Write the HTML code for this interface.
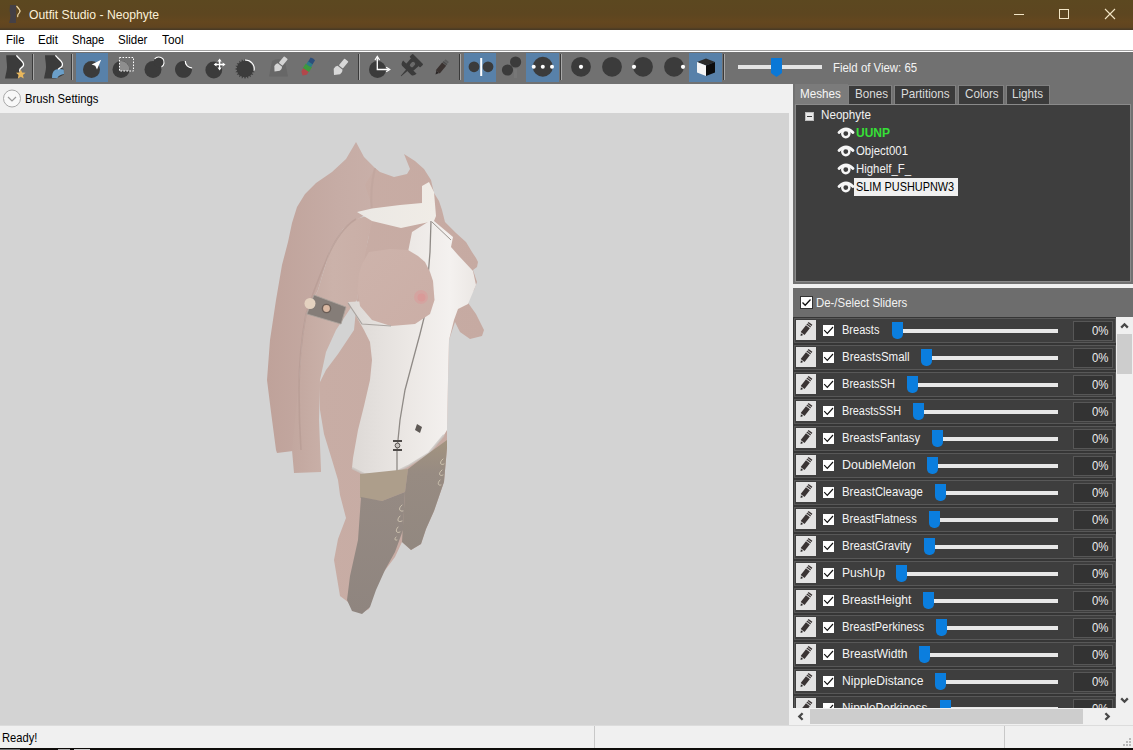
<!DOCTYPE html>
<html><head><meta charset="utf-8"><style>
*{margin:0;padding:0;box-sizing:border-box}
html,body{width:1133px;height:750px;overflow:hidden;background:#f0f0f0;font-family:"Liberation Sans",sans-serif;font-size:11.5px}
.a{position:absolute}
.t{position:absolute;white-space:nowrap;line-height:1}

</style></head><body>
<div class="a" style="left:0px;top:0px;width:1133px;height:30px;background:linear-gradient(#5c4820 0px,#5d4620 14px,#64471f 22px,#604420 27px,#5a4322 28px,#4a3a24 29px,#4a3a24 30px)"></div>

<svg class="a" style="left:8px;top:4px" width="16" height="20" viewBox="0 0 16 20">
<path d="M2 1 L8 1 L8 19 L1 19 C2 15 3 12 2 9 C1 6 2 3 2 1Z" fill="#40404c" opacity="0.85"/>
<path d="M8.5 2 L11 5 C12 6 12.5 7 11.5 8.5 L10 10.5 C9.5 11.2 10 12.5 9.5 13" stroke="#f0d9a8" stroke-width="1.2" fill="none"/>
</svg>
<div class="t" style="left:29px;top:9px;color:#fbf0d8;font-size:12.2px">Outfit Studio - Neophyte</div>
<div class="a" style="left:1014px;top:14px;width:10px;height:1px;background:#f3e6c6"></div>
<div class="a" style="left:1059px;top:9px;width:10px;height:10px;border:1px solid #f3e6c6"></div>
<svg class="a" style="left:1104px;top:8px" width="12" height="12" viewBox="0 0 12 12"><path d="M1 1L11 11M11 1L1 11" stroke="#f3e6c6" stroke-width="1.1"/></svg>
<div class="a" style="left:0px;top:30px;width:1133px;height:20px;background:#fff"></div>
<div class="a" style="left:0px;top:50px;width:1133px;height:1px;background:#a0a0a0"></div>
<div class="a" style="left:0px;top:51px;width:1133px;height:1px;background:#fff"></div>
<div class="t" style="left:6px;top:34px;color:#000;font-size:12.4px;transform:scaleX(0.93);transform-origin:0 0">File</div>
<div class="t" style="left:37.5px;top:34px;color:#000;font-size:12.4px;transform:scaleX(0.93);transform-origin:0 0">Edit</div>
<div class="t" style="left:71.5px;top:34px;color:#000;font-size:12.4px;transform:scaleX(0.9);transform-origin:0 0">Shape</div>
<div class="t" style="left:117.5px;top:34px;color:#000;font-size:12.4px;transform:scaleX(0.93);transform-origin:0 0">Slider</div>
<div class="t" style="left:162px;top:34px;color:#000;font-size:12.4px;transform:scaleX(0.95);transform-origin:0 0">Tool</div>
<div class="a" style="left:0px;top:52px;width:1133px;height:32px;background:#717171"></div>
<svg class="a" style="left:0;top:0" width="1133" height="84" viewBox="0 0 1133 84">
<rect x="32" y="54" width="1" height="26" fill="#3a3a3a"/><rect x="33" y="54" width="1" height="26" fill="#a8a8a8"/>
<rect x="71" y="54" width="1" height="26" fill="#3a3a3a"/><rect x="72" y="54" width="1" height="26" fill="#a8a8a8"/>
<rect x="358" y="54" width="1" height="26" fill="#3a3a3a"/><rect x="359" y="54" width="1" height="26" fill="#a8a8a8"/>
<rect x="459" y="54" width="1" height="26" fill="#3a3a3a"/><rect x="460" y="54" width="1" height="26" fill="#a8a8a8"/>
<rect x="560" y="54" width="1" height="26" fill="#3a3a3a"/><rect x="561" y="54" width="1" height="26" fill="#a8a8a8"/>
<rect x="723" y="54" width="1" height="26" fill="#3a3a3a"/><rect x="724" y="54" width="1" height="26" fill="#a8a8a8"/>
<rect x="76" y="53" width="32" height="29" fill="#5881a9"/>
<rect x="464" y="53" width="32" height="29" fill="#5881a9"/>
<rect x="526" y="53" width="33" height="29" fill="#5881a9"/>
<rect x="689" y="53" width="33" height="29" fill="#5881a9"/>
<path d="M6.2 55.2 L16.4 55.2 C18 57 20.5 59.5 22.5 61.5 C24.2 63.5 23.8 66 21.6 67.4 C19.8 68.4 19.3 69.5 19.2 71 L17.8 78.6 L5 78.6 C5.8 74 7 70 7 67 C7 63 6.2 59 6.2 55.2Z" fill="#3b3b3b"/>
<path d="M16.4 55.4 C18 57.5 20.6 59.6 22.6 62 C24.4 64.3 23.6 66.4 21.4 67.6 C19.8 68.5 19.5 69.8 19.6 71.5" stroke="#fff" stroke-width="1.3" fill="none"/>
<polygon points="20.80,69.40 22.12,72.58 25.56,72.85 22.94,75.10 23.74,78.45 20.80,76.65 17.86,78.45 18.66,75.10 16.04,72.85 19.48,72.58" fill="#e9b75c"/>
<path d="M45 55.2 L55.2 55.2 C57 57 59 58.8 61 61 C63 63.5 62.5 66 60.5 67.2 L63.8 69 L64 74.4 L56.2 78.6 L44 78.6 C44.8 74 46 70 46 67 C46 63 45 59 45 55.2Z" fill="#3b3b3b"/>
<path d="M52 78 C52 74 52.8 71.5 55 70 C57.5 68.6 61 68.8 63.8 69.4 L64 74 C61 74.5 58.8 75.2 57.2 78.2Z" fill="#6b9fc9"/>
<path d="M55.4 55.4 C57 57.5 59.4 59.2 61.4 61.6 C63.2 64 62.6 66.4 60.4 67.6 C59.2 68.2 58.6 68.8 58.2 69.4" stroke="#fff" stroke-width="1.3" fill="none"/>
<circle cx="91.5" cy="69.6" r="8.5" fill="#3b3b3b"/>
<path d="M101.2 59.8 L91.6 64.4 L95.2 65.8 L97 69.6Z" fill="#fff"/>
<circle cx="121" cy="69.6" r="8.5" fill="#3b3b3b"/>
<path d="M119.5 61.2 A8.5 8.5 0 0 1 129.4 69.6 L129.4 71 L119.5 71Z" fill="#8e8e8e"/>
<path d="M119.5 57.5 H133.5 V71 H119.5Z" fill="none" stroke="#fff" stroke-width="1" stroke-dasharray="1.6 1.4"/>
<circle cx="153" cy="69.6" r="8.5" fill="#3b3b3b"/>
<circle cx="159" cy="62" r="5.3" fill="#3b3b3b"/>
<path d="M154.6 59 A5.3 5.3 0 1 1 161.5 66.8" stroke="#fff" stroke-width="1.1" fill="none"/>
<path d="M177.6 63.2 A8.5 8.5 0 1 0 191.8 67.6 A6.3 6.3 0 0 1 185.5 61.3 A8.5 8.5 0 0 0 177.6 63.2Z" fill="#3b3b3b"/>
<path d="M185.3 61 A6.5 6.5 0 0 0 192.1 67.8" stroke="#fff" stroke-width="1.2" fill="none"/>
<circle cx="213.8" cy="70" r="8.4" fill="#3b3b3b"/>
<g fill="#fff"><path d="M219.6 58.6 L221.7 61.4 H217.5Z M219.6 70.4 L221.7 67.6 H217.5Z M213.7 64.5 L216.5 62.4 V66.6Z M225.5 64.5 L222.7 62.4 V66.6Z"/><path d="M218.9 61 H220.3 V68 H218.9Z M216 63.8 H223.2 V65.2 H216Z"/></g>
<polygon points="255.20,69.00 252.31,70.16 254.70,72.15 251.59,72.36 253.25,75.00 250.23,74.23 251.00,77.25 248.36,75.59 248.15,78.70 246.16,76.31 245.00,79.20 243.84,76.31 241.85,78.70 241.64,75.59 239.00,77.25 239.77,74.23 236.75,75.00 238.41,72.36 235.30,72.15 237.69,70.16 234.80,69.00 237.69,67.84 235.30,65.85 238.41,65.64 236.75,63.00 239.77,63.77 239.00,60.75 241.64,62.41 241.85,59.30 243.84,61.69 245.00,58.80 246.16,61.69 248.15,59.30 248.36,62.41 251.00,60.75 250.23,63.77 253.25,63.00 251.59,65.64 254.70,65.85 252.31,67.84" fill="#3b3b3b"/>
<path d="M245 58 A11 11 0 0 1 256.2 69.8 L245 69Z" fill="#717171"/>
<circle cx="245" cy="69" r="8.2" fill="#3b3b3b"/>
<path d="M245 60 A9 9 0 0 1 254.2 70.5" stroke="#fff" stroke-width="1.1" fill="none"/>
<path d="M272 61 Q278.5 57 285 61 L288 76.5 H269Z" fill="#676767"/>
<g transform="translate(274.5 71.5) rotate(-50)"><path d="M0 0 L4 -3.6 Q7 -4.2 8.5 -2.8 L8.5 2.8 Q7 4.2 4 3.6Z" fill="#d4d4d4"/><rect x="9.5" y="-2.4" width="8.5" height="4.8" rx="0.8" fill="#d4d4d4"/></g>
<g transform="translate(302.5 75.5) rotate(-58)"><path d="M0 0 L3 -3.2 H7 V3.2 H3Z" fill="#b3474b"/><path d="M6.5 -3.6 H12 V3.6 H6.5Z" fill="#3e9a3d"/><path d="M11.5 -2.8 H15.5 V2.8 H11.5Z" fill="#2d7b88"/><path d="M15 -2.6 H19.5 L20 0 L19.5 2.6 H15Z" fill="#2c4e7b"/></g>
<g transform="translate(334 75) rotate(-50)"><path d="M0 0 L4.5 -4.2 Q8 -4.8 9.5 -3.2 L9.5 3.2 Q8 4.8 4.5 4.2Z" fill="#d8d8d8"/><rect x="10.5" y="-2.6" width="9" height="5.2" rx="0.8" fill="#d8d8d8"/></g>
<circle cx="377.5" cy="69.4" r="8.5" fill="#3b3b3b"/>
<path d="M377.3 57.5 V69.5 H388.8" stroke="#fff" stroke-width="1.3" fill="none"/>
<path d="M375 60 L377.3 56.4 L379.6 60 M386.2 67.2 L389.8 69.5 L386.2 71.8" stroke="#fff" stroke-width="1.2" fill="none"/>
<g transform="translate(409.5 67.5) rotate(45)" fill="#3b3b3b"><rect x="-7.5" y="-12" width="15" height="4.5" rx="0.8"/><path d="M-5.5 -8 H5.5 L5 0 H-5Z"/><path d="M-9.5 -0.5 H9.5 Q9 3.5 6.5 4 H-6.5 Q-9 3.5 -9.5 -0.5Z"/><path d="M-1 3.5 H1 L0.3 12 H-0.3Z"/></g>
<g transform="translate(409.5 67.5) rotate(45)"><rect x="-2" y="-7" width="4" height="5.5" rx="1.6" fill="#6a6a6a"/></g>
<g transform="translate(435.5 74.5) rotate(-50)"><path d="M0 0 L3.5 -1.8 V1.8Z" fill="#2a2626"/><rect x="3.5" y="-2.6" width="10" height="5.2" fill="#3a3230"/><rect x="14" y="-2.4" width="1.6" height="4.8" fill="#4a4a4a"/><rect x="16.2" y="-2.2" width="2" height="4.4" fill="#5a5a5a"/></g>
<circle cx="474" cy="66.8" r="5.4" fill="#3b3b3b"/><circle cx="488" cy="66.8" r="5.4" fill="#3b3b3b"/>
<rect x="480.2" y="58" width="2" height="18" fill="#fff"/>
<circle cx="507.5" cy="70" r="5.6" fill="#3b3b3b"/><circle cx="515.6" cy="62" r="5.6" fill="#3b3b3b"/>
<rect x="514" y="69" width="3" height="9" fill="#777"/>
<circle cx="542.8" cy="66.8" r="10" fill="#3b3b3b"/>
<circle cx="533.7" cy="66.8" r="2" fill="#fff"/>
<circle cx="542.8" cy="66.8" r="2" fill="#fff"/>
<circle cx="552" cy="66.8" r="2" fill="#fff"/>
<circle cx="581" cy="66.8" r="9.9" fill="#3b3b3b"/>
<circle cx="581" cy="66.8" r="2.1" fill="#fff"/>
<circle cx="612" cy="66.8" r="9.9" fill="#3b3b3b"/>
<circle cx="643" cy="66.8" r="9.9" fill="#3b3b3b"/>
<circle cx="634" cy="66.8" r="2.1" fill="#fff"/>
<circle cx="674" cy="66.8" r="9.9" fill="#3b3b3b"/>
<circle cx="683" cy="66.8" r="2.1" fill="#fff"/>
<path d="M706 58.5 L715 62 L706 65.5 L697 62Z" fill="#2a2a2a"/><path d="M697 62 L706 65.5 L706 76 L697 72.5Z" fill="#f4f4f4"/><path d="M706 65.5 L715 62 L715 72.5 L706 76Z" fill="#0c0c0c"/>
<rect x="738" y="65" width="84" height="4" fill="#e4e4e4"/>
<path d="M771 58 H782 V73 L776.5 77 L771 73Z" fill="#0a78d7"/>
</svg>
<div class="t" style="left:833px;top:62px;color:#f4f4f4;font-size:12px;transform:scaleX(.95);transform-origin:0 0">Field of View: 65</div>
<div class="a" style="left:0px;top:84px;width:793px;height:29px;background:#f0f0f0"></div>
<svg class="a" style="left:2px;top:89px" width="20" height="20" viewBox="0 0 20 20"><circle cx="10" cy="9.5" r="8.5" fill="#f8f8f8" stroke="#a8a8a8" stroke-width="1"/><path d="M6 8 L10 12 L14 8" stroke="#9a9a9a" stroke-width="1.2" fill="none"/></svg>
<div class="t" style="left:24.5px;top:93px;color:#000;font-size:12.4px;transform:scaleX(.91);transform-origin:0 0">Brush Settings</div>
<div class="a" style="left:0px;top:113px;width:789px;height:612px;background:#d3d3d3"></div>
<svg class="a" style="left:0;top:113px" width="789" height="612" viewBox="0 113 789 612">
<defs>
<linearGradient id="gBack" x1="0" y1="0" x2="1" y2="0"><stop offset="0" stop-color="#bfa29a"/><stop offset="0.6" stop-color="#c6aca5"/><stop offset="1" stop-color="#c9b0a9"/></linearGradient>
<linearGradient id="gFront" x1="0" y1="0" x2="1" y2="0"><stop offset="0" stop-color="#c2a79f"/><stop offset="0.5" stop-color="#cbb2aa"/><stop offset="1" stop-color="#c9aea6"/></linearGradient>
<linearGradient id="gTorso" x1="0" y1="0" x2="1" y2="0"><stop offset="0" stop-color="#c8ada5"/><stop offset="1" stop-color="#c6aaa2"/></linearGradient>
<linearGradient id="gBreast" x1="0" y1="0" x2="1" y2="1"><stop offset="0" stop-color="#cdb3ab"/><stop offset="1" stop-color="#cbaea6"/></linearGradient>
<linearGradient id="gCollar" x1="0" y1="0" x2="1" y2="0"><stop offset="0" stop-color="#ebe8e4"/><stop offset="1" stop-color="#f0ece6"/></linearGradient>
<linearGradient id="gDress" x1="0" y1="0" x2="1" y2="0"><stop offset="0" stop-color="#dcd8d5"/><stop offset="0.45" stop-color="#ebe7e4"/><stop offset="0.8" stop-color="#f4f1ef"/><stop offset="1" stop-color="#ebe7e4"/></linearGradient>
<linearGradient id="gStock" x1="0" y1="0" x2="0" y2="1"><stop offset="0" stop-color="#958a83"/><stop offset="1" stop-color="#8f857f"/></linearGradient>
<linearGradient id="gFar" x1="0" y1="0" x2="0" y2="1"><stop offset="0" stop-color="#a39480"/><stop offset="0.3" stop-color="#978b82"/><stop offset="1" stop-color="#928880"/></linearGradient>
</defs>
<polygon points="356,142 346,159 332,172 316,183 305,194 297,207 292,223 288,242 282,265 276,300 270,340 267,380 271,412 276,450 277,453 301,450 300,420 299,380 302,340 306,314 318,290 330,250 343,229 356,220 370,212 385,178 375,168 364,157" fill="url(#gBack)" />
<polygon points="375,168 380,172 394,177 407,174 410,169 404,154 415,161 424,169 431,180 434,193 439,201 442,210 445,222 456,233 466,242 472,252 476,258 478,262 477,267 473,270 477,282 474,290 466,300 476,314 484,330 482,336 470,339 460,332 455,322 449,340 448,380 447,430 447,448 444,482 434,511 426,529 421,544 411,550 402,542 395,557 377,581 369,609 361,613 351,607 348,602 340,596 334,560 338,539 346,518 340,495 338,480 332,460 324,434 320,410 319,384 326,370 338,354 354,330 357,300 360,270 368,240 372,214 370,200 365,185" fill="url(#gTorso)" />
<polygon points="330,250 343,229 356,219 374,214 368,240 362,270 357,300 352,306 336,330 326,352 320,380 319,420 321,470 321,472 294,473 292,450 299,380 302,340 306,314 318,290" fill="url(#gFront)" />
<path d="M356 219 C345 226 335 240 328 256 C320 275 312 295 306 314 C302 335 299 360 299 390 C299 415 300 435 301 450" stroke="#b39890" stroke-width="1.6" fill="none" opacity="0.55"/>
<path d="M375 168 C372 180 370 195 372 214" stroke="#b79c94" stroke-width="2" fill="none" opacity="0.3"/>
<polygon points="357,212 372,208.5 400,205 422,203 422,186 429,182 434,192 436,216 434,221 401,228 372,221" fill="url(#gCollar)" />
<polygon points="408,252 412,232 431,220 434,221 453,237 451,247 458,255 473,271 476,285 468,304 458,309 454,320 449,340 448,380 447,430 444,435 429,453 408,466 390,475 364,474 352,468 353,458 358,430 364,406 370,380 372,360 370,342 364,330 348,302 367,301 400,300 412,270" fill="url(#gDress)" />
<path d="M352 468 L364 474 L390 475 L408 466 L429 453 L444 435" stroke="#c9c4c0" stroke-width="2" fill="none" opacity="0.8"/>
<path d="M431 221 L430 252 L427 290 L425 314 L420 334 L413 360 L405 390 L400 420 L397 450 L397 474" stroke="#8f8a86" stroke-width="1.3" fill="none"/><path d="M432 222 L451 240" stroke="#9a9590" stroke-width="1"/>
<polygon points="369,252 390,249 408,250 418,256 425,262 430,272 433,281 434.5,300 430,314 415,324 391,326 372,320 360,306 357.5,290 359,274 362,264" fill="url(#gBreast)" />
<circle cx="421" cy="297" r="7" fill="#d4a4a0"/><circle cx="421.5" cy="297.5" r="4" fill="#d99a98"/>
<path d="M348 303 L362 324 L391 326" stroke="#a9a4a0" stroke-width="1.2" fill="none"/>
<polygon points="360,474 408,469 405,492 382,501 360,498" fill="#ad9e8b" />
<polygon points="361,497 382,501 405,492 403,530 395,552 385,570 376,590 370,607 362,614 352,611 347,600 350,576 358,540" fill="url(#gStock)" />
<polygon points="408,469 429,453 447,440 447,448 444,482 434,511 426,529 421,544 411,550 402,542 405,492" fill="url(#gFar)" />
<polygon points="314,295 346,307 341,324 307,314" fill="#857d78"  stroke="#aaa29c" stroke-width="0.8"/>
<circle cx="310" cy="303.5" r="5.5" fill="#e4d2c0"/><circle cx="326.5" cy="308.5" r="4.8" fill="#6a5d56"/><circle cx="326.5" cy="308.5" r="3.4" fill="#d9b8a2"/>
<path d="M393 441 H402 M393 450 H402" stroke="#4e4a48" stroke-width="1.8"/><circle cx="397.5" cy="445.5" r="2.4" fill="#c9c4c0" stroke="#5a5552" stroke-width="1"/><path d="M417 424 L422 427 L420 433 L415 430Z" fill="#5e5955"/>
<g stroke="#ddd2bc" stroke-width="0.9" fill="none" stroke-linecap="round" opacity="0.85"><path d="M402 505 C398 508 399 512 403 511 M400 516 C396 520 398 523 402 521 M398 527 C395 530 396 534 400 532 M396 537 C394 539 395 541 397 540"/><path d="M443 459 C439 462 440 466 444 464 M442 470 C438 473 439 477 443 475 M440 480 C437 483 438 486 441 485"/></g>
</svg>
<div class="a" style="left:0px;top:725px;width:1133px;height:23px;background:#f0f0f0"></div>
<div class="a" style="left:0px;top:725px;width:1133px;height:1px;background:#dcdcdc"></div>
<div class="t" style="left:1.5px;top:732px;color:#000;font-size:12.4px;transform:scaleX(.9);transform-origin:0 0">Ready!</div>
<div class="a" style="left:594px;top:726px;width:1px;height:22px;background:#c8c8c8"></div>
<div class="a" style="left:1004px;top:726px;width:1px;height:22px;background:#c8c8c8"></div>
<svg class="a" style="left:1122px;top:737px" width="10" height="10" viewBox="0 0 10 10" fill="#b8b8b8"><rect x="7" y="1" width="2" height="2"/><rect x="4" y="4" width="2" height="2"/><rect x="7" y="4" width="2" height="2"/><rect x="1" y="7" width="2" height="2"/><rect x="4" y="7" width="2" height="2"/><rect x="7" y="7" width="2" height="2"/></svg>
<div class="a" style="left:0px;top:748px;width:1133px;height:2px;background:#0e0c0a"></div>
<div class="a" style="left:0px;top:749px;width:20px;height:1px;background:#707070"></div>
<div class="a" style="left:58px;top:749px;width:12px;height:1px;background:#a8a8a8"></div>
<div class="a" style="left:74px;top:749px;width:16px;height:1px;background:#c8c8c8"></div>
<div class="a" style="left:789px;top:84px;width:4px;height:641px;background:#f0f0f0"></div>
<div class="a" style="left:793px;top:84px;width:340px;height:200px;background:#717171"></div>
<div class="a" style="left:795px;top:84px;width:53px;height:20px;background:#7b7b7b"></div>
<div class="t" style="left:800px;top:88px;color:#f6f6f6;font-size:12.4px;transform:scaleX(.94);transform-origin:0 0">Meshes</div>
<div class="a" style="left:848px;top:85px;width:44px;height:19px;background:#3b3b3b;border:1px solid #808080;border-bottom:none"></div>
<div class="t" style="left:855px;top:88px;color:#dcdcdc;font-size:12.4px;transform:scaleX(.94);transform-origin:0 0">Bones</div>
<div class="a" style="left:894px;top:85px;width:62px;height:19px;background:#3b3b3b;border:1px solid #808080;border-bottom:none"></div>
<div class="t" style="left:901px;top:88px;color:#dcdcdc;font-size:12.4px;transform:scaleX(.94);transform-origin:0 0">Partitions</div>
<div class="a" style="left:958px;top:85px;width:46px;height:19px;background:#3b3b3b;border:1px solid #808080;border-bottom:none"></div>
<div class="t" style="left:965px;top:88px;color:#dcdcdc;font-size:12.4px;transform:scaleX(.94);transform-origin:0 0">Colors</div>
<div class="a" style="left:1006px;top:85px;width:44px;height:19px;background:#3b3b3b;border:1px solid #808080;border-bottom:none"></div>
<div class="t" style="left:1012px;top:88px;color:#dcdcdc;font-size:12.4px;transform:scaleX(.94);transform-origin:0 0">Lights</div>
<div class="a" style="left:795px;top:104px;width:336px;height:178px;background:#3e3e3e;border:1px solid #8a8a8a"></div>
<div class="a" style="left:805px;top:112px;width:9px;height:9px;background:#e8e8e8;border:1px solid #bdbdbd"></div>
<div class="a" style="left:807px;top:116px;width:5px;height:1px;background:#3a3a3a"></div>
<div class="t" style="left:821px;top:109px;color:#f2f2f2;font-size:12.4px;transform:scaleX(.94);transform-origin:0 0">Neophyte</div>
<svg class="a" style="left:837px;top:127px" width="18" height="12" viewBox="0 0 18 12"><path d="M2 5.6 Q9 -1.6 16 5.6" stroke="#f6f6f6" stroke-width="2.8" fill="none" stroke-linecap="round"/><circle cx="8.8" cy="6.6" r="3.6" fill="none" stroke="#f6f6f6" stroke-width="2.4"/><circle cx="8.8" cy="6.6" r="1.3" fill="#3e3e3e"/></svg>
<div class="t" style="left:856px;top:127px;transform-origin:0 0;font-size:12.4px;color:#36e036;font-weight:bold;transform:scaleX(.97);">UUNP</div>
<svg class="a" style="left:837px;top:145px" width="18" height="12" viewBox="0 0 18 12"><path d="M2 5.6 Q9 -1.6 16 5.6" stroke="#f6f6f6" stroke-width="2.8" fill="none" stroke-linecap="round"/><circle cx="8.8" cy="6.6" r="3.6" fill="none" stroke="#f6f6f6" stroke-width="2.4"/><circle cx="8.8" cy="6.6" r="1.3" fill="#3e3e3e"/></svg>
<div class="t" style="left:856px;top:145px;transform-origin:0 0;font-size:12.4px;color:#f2f2f2;transform:scaleX(.92);">Object001</div>
<svg class="a" style="left:837px;top:163px" width="18" height="12" viewBox="0 0 18 12"><path d="M2 5.6 Q9 -1.6 16 5.6" stroke="#f6f6f6" stroke-width="2.8" fill="none" stroke-linecap="round"/><circle cx="8.8" cy="6.6" r="3.6" fill="none" stroke="#f6f6f6" stroke-width="2.4"/><circle cx="8.8" cy="6.6" r="1.3" fill="#3e3e3e"/></svg>
<div class="t" style="left:856px;top:163px;transform-origin:0 0;font-size:12.4px;color:#f2f2f2;transform:scaleX(.92);">Highelf_F_</div>
<svg class="a" style="left:837px;top:181px" width="18" height="12" viewBox="0 0 18 12"><path d="M2 5.6 Q9 -1.6 16 5.6" stroke="#f6f6f6" stroke-width="2.8" fill="none" stroke-linecap="round"/><circle cx="8.8" cy="6.6" r="3.6" fill="none" stroke="#f6f6f6" stroke-width="2.4"/><circle cx="8.8" cy="6.6" r="1.3" fill="#3e3e3e"/></svg>
<div class="a" style="left:854px;top:178px;width:104px;height:18px;background:#f0f0f0"></div>
<div class="t" style="left:856px;top:181px;transform-origin:0 0;font-size:12.4px;color:#000;transform:scaleX(.88);">SLIM PUSHUPNW3</div>
<div class="a" style="left:793px;top:288px;width:340px;height:29px;background:#6d6d6d"></div>
<div class="a" style="left:800px;top:296px;width:13px;height:13px;background:#fff;border:1px solid #333"></div>
<svg class="a" style="left:800px;top:296px" width="13" height="13" viewBox="0 0 13 13"><path d="M2.5 6.5 L5.2 9.3 L10.5 3.5" stroke="#111" stroke-width="1.3" fill="none"/></svg>
<div class="t" style="left:816px;top:297px;color:#f2f2f2;font-size:12.4px;transform:scaleX(.92);transform-origin:0 0">De-/Select Sliders</div>
<div class="a" style="left:793px;top:317px;width:323px;height:391px;background:#363636;overflow:hidden">
<div class="a" style="left:1px;top:1px;width:322px;height:25px;background:#3e3e3e;border:1px solid #585858">
<div class="a" style="left:1px;top:1px;width:20px;height:20px;background:#e3e3e3"></div>
<svg class="a" style="left:0;top:0" width="24" height="24" viewBox="0 0 24 24"><g transform="translate(5.6 17) rotate(-52) scale(0.9)"><path d="M0 0 L2.6 -1.6 L2.6 1.6Z" fill="#2a2828"/><rect x="3.6" y="-2.7" width="9.6" height="5.4" fill="#3a3434"/><rect x="14" y="-2.7" width="1.4" height="5.4" fill="#3a3434"/><rect x="16.2" y="-2.7" width="1.6" height="5.4" fill="#3a3434"/></g></svg>
<div class="a" style="left:28px;top:6px;width:11px;height:11px;background:#fff"></div>
<svg class="a" style="left:28px;top:6px" width="11" height="11" viewBox="0 0 11 11"><path d="M1.2 5.2 L4.3 8.4 L10 2" stroke="#111" stroke-width="1.15" fill="none"/></svg>
<div class="t" style="left:47px;top:5px;color:#f4f4f4;font-size:12px;transform:scaleX(0.920);transform-origin:0 0">Breasts</div>
<div class="a" style="left:105px;top:10px;width:158px;height:4px;background:#e8e8e8"></div>
<div class="a" style="left:97px;top:3px;width:11px;height:17px;background:#0b7ede;border-radius:0 0 5px 5px"></div>
<div class="a" style="left:278px;top:2px;width:40px;height:20px;background:#333;border:1px solid #575757"></div>
<div class="t" style="left:297px;top:6px;color:#ececec;font-size:12px;transform:scaleX(.95);transform-origin:0 0">0%</div>
</div>
<div class="a" style="left:1px;top:28px;width:322px;height:25px;background:#3e3e3e;border:1px solid #585858">
<div class="a" style="left:1px;top:1px;width:20px;height:20px;background:#e3e3e3"></div>
<svg class="a" style="left:0;top:0" width="24" height="24" viewBox="0 0 24 24"><g transform="translate(5.6 17) rotate(-52) scale(0.9)"><path d="M0 0 L2.6 -1.6 L2.6 1.6Z" fill="#2a2828"/><rect x="3.6" y="-2.7" width="9.6" height="5.4" fill="#3a3434"/><rect x="14" y="-2.7" width="1.4" height="5.4" fill="#3a3434"/><rect x="16.2" y="-2.7" width="1.6" height="5.4" fill="#3a3434"/></g></svg>
<div class="a" style="left:28px;top:6px;width:11px;height:11px;background:#fff"></div>
<svg class="a" style="left:28px;top:6px" width="11" height="11" viewBox="0 0 11 11"><path d="M1.2 5.2 L4.3 8.4 L10 2" stroke="#111" stroke-width="1.15" fill="none"/></svg>
<div class="t" style="left:47px;top:5px;color:#f4f4f4;font-size:12px;transform:scaleX(0.957);transform-origin:0 0">BreastsSmall</div>
<div class="a" style="left:134px;top:10px;width:129px;height:4px;background:#e8e8e8"></div>
<div class="a" style="left:126px;top:3px;width:11px;height:17px;background:#0b7ede;border-radius:0 0 5px 5px"></div>
<div class="a" style="left:278px;top:2px;width:40px;height:20px;background:#333;border:1px solid #575757"></div>
<div class="t" style="left:297px;top:6px;color:#ececec;font-size:12px;transform:scaleX(.95);transform-origin:0 0">0%</div>
</div>
<div class="a" style="left:1px;top:55px;width:322px;height:25px;background:#3e3e3e;border:1px solid #585858">
<div class="a" style="left:1px;top:1px;width:20px;height:20px;background:#e3e3e3"></div>
<svg class="a" style="left:0;top:0" width="24" height="24" viewBox="0 0 24 24"><g transform="translate(5.6 17) rotate(-52) scale(0.9)"><path d="M0 0 L2.6 -1.6 L2.6 1.6Z" fill="#2a2828"/><rect x="3.6" y="-2.7" width="9.6" height="5.4" fill="#3a3434"/><rect x="14" y="-2.7" width="1.4" height="5.4" fill="#3a3434"/><rect x="16.2" y="-2.7" width="1.6" height="5.4" fill="#3a3434"/></g></svg>
<div class="a" style="left:28px;top:6px;width:11px;height:11px;background:#fff"></div>
<svg class="a" style="left:28px;top:6px" width="11" height="11" viewBox="0 0 11 11"><path d="M1.2 5.2 L4.3 8.4 L10 2" stroke="#111" stroke-width="1.15" fill="none"/></svg>
<div class="t" style="left:47px;top:5px;color:#f4f4f4;font-size:12px;transform:scaleX(0.925);transform-origin:0 0">BreastsSH</div>
<div class="a" style="left:120px;top:10px;width:143px;height:4px;background:#e8e8e8"></div>
<div class="a" style="left:112px;top:3px;width:11px;height:17px;background:#0b7ede;border-radius:0 0 5px 5px"></div>
<div class="a" style="left:278px;top:2px;width:40px;height:20px;background:#333;border:1px solid #575757"></div>
<div class="t" style="left:297px;top:6px;color:#ececec;font-size:12px;transform:scaleX(.95);transform-origin:0 0">0%</div>
</div>
<div class="a" style="left:1px;top:82px;width:322px;height:25px;background:#3e3e3e;border:1px solid #585858">
<div class="a" style="left:1px;top:1px;width:20px;height:20px;background:#e3e3e3"></div>
<svg class="a" style="left:0;top:0" width="24" height="24" viewBox="0 0 24 24"><g transform="translate(5.6 17) rotate(-52) scale(0.9)"><path d="M0 0 L2.6 -1.6 L2.6 1.6Z" fill="#2a2828"/><rect x="3.6" y="-2.7" width="9.6" height="5.4" fill="#3a3434"/><rect x="14" y="-2.7" width="1.4" height="5.4" fill="#3a3434"/><rect x="16.2" y="-2.7" width="1.6" height="5.4" fill="#3a3434"/></g></svg>
<div class="a" style="left:28px;top:6px;width:11px;height:11px;background:#fff"></div>
<svg class="a" style="left:28px;top:6px" width="11" height="11" viewBox="0 0 11 11"><path d="M1.2 5.2 L4.3 8.4 L10 2" stroke="#111" stroke-width="1.15" fill="none"/></svg>
<div class="t" style="left:47px;top:5px;color:#f4f4f4;font-size:12px;transform:scaleX(0.903);transform-origin:0 0">BreastsSSH</div>
<div class="a" style="left:126px;top:10px;width:137px;height:4px;background:#e8e8e8"></div>
<div class="a" style="left:118px;top:3px;width:11px;height:17px;background:#0b7ede;border-radius:0 0 5px 5px"></div>
<div class="a" style="left:278px;top:2px;width:40px;height:20px;background:#333;border:1px solid #575757"></div>
<div class="t" style="left:297px;top:6px;color:#ececec;font-size:12px;transform:scaleX(.95);transform-origin:0 0">0%</div>
</div>
<div class="a" style="left:1px;top:109px;width:322px;height:25px;background:#3e3e3e;border:1px solid #585858">
<div class="a" style="left:1px;top:1px;width:20px;height:20px;background:#e3e3e3"></div>
<svg class="a" style="left:0;top:0" width="24" height="24" viewBox="0 0 24 24"><g transform="translate(5.6 17) rotate(-52) scale(0.9)"><path d="M0 0 L2.6 -1.6 L2.6 1.6Z" fill="#2a2828"/><rect x="3.6" y="-2.7" width="9.6" height="5.4" fill="#3a3434"/><rect x="14" y="-2.7" width="1.4" height="5.4" fill="#3a3434"/><rect x="16.2" y="-2.7" width="1.6" height="5.4" fill="#3a3434"/></g></svg>
<div class="a" style="left:28px;top:6px;width:11px;height:11px;background:#fff"></div>
<svg class="a" style="left:28px;top:6px" width="11" height="11" viewBox="0 0 11 11"><path d="M1.2 5.2 L4.3 8.4 L10 2" stroke="#111" stroke-width="1.15" fill="none"/></svg>
<div class="t" style="left:47px;top:5px;color:#f4f4f4;font-size:12px;transform:scaleX(0.937);transform-origin:0 0">BreastsFantasy</div>
<div class="a" style="left:145px;top:10px;width:118px;height:4px;background:#e8e8e8"></div>
<div class="a" style="left:137px;top:3px;width:11px;height:17px;background:#0b7ede;border-radius:0 0 5px 5px"></div>
<div class="a" style="left:278px;top:2px;width:40px;height:20px;background:#333;border:1px solid #575757"></div>
<div class="t" style="left:297px;top:6px;color:#ececec;font-size:12px;transform:scaleX(.95);transform-origin:0 0">0%</div>
</div>
<div class="a" style="left:1px;top:136px;width:322px;height:25px;background:#3e3e3e;border:1px solid #585858">
<div class="a" style="left:1px;top:1px;width:20px;height:20px;background:#e3e3e3"></div>
<svg class="a" style="left:0;top:0" width="24" height="24" viewBox="0 0 24 24"><g transform="translate(5.6 17) rotate(-52) scale(0.9)"><path d="M0 0 L2.6 -1.6 L2.6 1.6Z" fill="#2a2828"/><rect x="3.6" y="-2.7" width="9.6" height="5.4" fill="#3a3434"/><rect x="14" y="-2.7" width="1.4" height="5.4" fill="#3a3434"/><rect x="16.2" y="-2.7" width="1.6" height="5.4" fill="#3a3434"/></g></svg>
<div class="a" style="left:28px;top:6px;width:11px;height:11px;background:#fff"></div>
<svg class="a" style="left:28px;top:6px" width="11" height="11" viewBox="0 0 11 11"><path d="M1.2 5.2 L4.3 8.4 L10 2" stroke="#111" stroke-width="1.15" fill="none"/></svg>
<div class="t" style="left:47px;top:5px;color:#f4f4f4;font-size:12px;transform:scaleX(1.039);transform-origin:0 0">DoubleMelon</div>
<div class="a" style="left:140px;top:10px;width:123px;height:4px;background:#e8e8e8"></div>
<div class="a" style="left:132px;top:3px;width:11px;height:17px;background:#0b7ede;border-radius:0 0 5px 5px"></div>
<div class="a" style="left:278px;top:2px;width:40px;height:20px;background:#333;border:1px solid #575757"></div>
<div class="t" style="left:297px;top:6px;color:#ececec;font-size:12px;transform:scaleX(.95);transform-origin:0 0">0%</div>
</div>
<div class="a" style="left:1px;top:163px;width:322px;height:25px;background:#3e3e3e;border:1px solid #585858">
<div class="a" style="left:1px;top:1px;width:20px;height:20px;background:#e3e3e3"></div>
<svg class="a" style="left:0;top:0" width="24" height="24" viewBox="0 0 24 24"><g transform="translate(5.6 17) rotate(-52) scale(0.9)"><path d="M0 0 L2.6 -1.6 L2.6 1.6Z" fill="#2a2828"/><rect x="3.6" y="-2.7" width="9.6" height="5.4" fill="#3a3434"/><rect x="14" y="-2.7" width="1.4" height="5.4" fill="#3a3434"/><rect x="16.2" y="-2.7" width="1.6" height="5.4" fill="#3a3434"/></g></svg>
<div class="a" style="left:28px;top:6px;width:11px;height:11px;background:#fff"></div>
<svg class="a" style="left:28px;top:6px" width="11" height="11" viewBox="0 0 11 11"><path d="M1.2 5.2 L4.3 8.4 L10 2" stroke="#111" stroke-width="1.15" fill="none"/></svg>
<div class="t" style="left:47px;top:5px;color:#f4f4f4;font-size:12px;transform:scaleX(0.948);transform-origin:0 0">BreastCleavage</div>
<div class="a" style="left:148px;top:10px;width:115px;height:4px;background:#e8e8e8"></div>
<div class="a" style="left:140px;top:3px;width:11px;height:17px;background:#0b7ede;border-radius:0 0 5px 5px"></div>
<div class="a" style="left:278px;top:2px;width:40px;height:20px;background:#333;border:1px solid #575757"></div>
<div class="t" style="left:297px;top:6px;color:#ececec;font-size:12px;transform:scaleX(.95);transform-origin:0 0">0%</div>
</div>
<div class="a" style="left:1px;top:190px;width:322px;height:25px;background:#3e3e3e;border:1px solid #585858">
<div class="a" style="left:1px;top:1px;width:20px;height:20px;background:#e3e3e3"></div>
<svg class="a" style="left:0;top:0" width="24" height="24" viewBox="0 0 24 24"><g transform="translate(5.6 17) rotate(-52) scale(0.9)"><path d="M0 0 L2.6 -1.6 L2.6 1.6Z" fill="#2a2828"/><rect x="3.6" y="-2.7" width="9.6" height="5.4" fill="#3a3434"/><rect x="14" y="-2.7" width="1.4" height="5.4" fill="#3a3434"/><rect x="16.2" y="-2.7" width="1.6" height="5.4" fill="#3a3434"/></g></svg>
<div class="a" style="left:28px;top:6px;width:11px;height:11px;background:#fff"></div>
<svg class="a" style="left:28px;top:6px" width="11" height="11" viewBox="0 0 11 11"><path d="M1.2 5.2 L4.3 8.4 L10 2" stroke="#111" stroke-width="1.15" fill="none"/></svg>
<div class="t" style="left:47px;top:5px;color:#f4f4f4;font-size:12px;transform:scaleX(0.934);transform-origin:0 0">BreastFlatness</div>
<div class="a" style="left:142px;top:10px;width:121px;height:4px;background:#e8e8e8"></div>
<div class="a" style="left:134px;top:3px;width:11px;height:17px;background:#0b7ede;border-radius:0 0 5px 5px"></div>
<div class="a" style="left:278px;top:2px;width:40px;height:20px;background:#333;border:1px solid #575757"></div>
<div class="t" style="left:297px;top:6px;color:#ececec;font-size:12px;transform:scaleX(.95);transform-origin:0 0">0%</div>
</div>
<div class="a" style="left:1px;top:217px;width:322px;height:25px;background:#3e3e3e;border:1px solid #585858">
<div class="a" style="left:1px;top:1px;width:20px;height:20px;background:#e3e3e3"></div>
<svg class="a" style="left:0;top:0" width="24" height="24" viewBox="0 0 24 24"><g transform="translate(5.6 17) rotate(-52) scale(0.9)"><path d="M0 0 L2.6 -1.6 L2.6 1.6Z" fill="#2a2828"/><rect x="3.6" y="-2.7" width="9.6" height="5.4" fill="#3a3434"/><rect x="14" y="-2.7" width="1.4" height="5.4" fill="#3a3434"/><rect x="16.2" y="-2.7" width="1.6" height="5.4" fill="#3a3434"/></g></svg>
<div class="a" style="left:28px;top:6px;width:11px;height:11px;background:#fff"></div>
<svg class="a" style="left:28px;top:6px" width="11" height="11" viewBox="0 0 11 11"><path d="M1.2 5.2 L4.3 8.4 L10 2" stroke="#111" stroke-width="1.15" fill="none"/></svg>
<div class="t" style="left:47px;top:5px;color:#f4f4f4;font-size:12px;transform:scaleX(0.954);transform-origin:0 0">BreastGravity</div>
<div class="a" style="left:137px;top:10px;width:126px;height:4px;background:#e8e8e8"></div>
<div class="a" style="left:129px;top:3px;width:11px;height:17px;background:#0b7ede;border-radius:0 0 5px 5px"></div>
<div class="a" style="left:278px;top:2px;width:40px;height:20px;background:#333;border:1px solid #575757"></div>
<div class="t" style="left:297px;top:6px;color:#ececec;font-size:12px;transform:scaleX(.95);transform-origin:0 0">0%</div>
</div>
<div class="a" style="left:1px;top:244px;width:322px;height:25px;background:#3e3e3e;border:1px solid #585858">
<div class="a" style="left:1px;top:1px;width:20px;height:20px;background:#e3e3e3"></div>
<svg class="a" style="left:0;top:0" width="24" height="24" viewBox="0 0 24 24"><g transform="translate(5.6 17) rotate(-52) scale(0.9)"><path d="M0 0 L2.6 -1.6 L2.6 1.6Z" fill="#2a2828"/><rect x="3.6" y="-2.7" width="9.6" height="5.4" fill="#3a3434"/><rect x="14" y="-2.7" width="1.4" height="5.4" fill="#3a3434"/><rect x="16.2" y="-2.7" width="1.6" height="5.4" fill="#3a3434"/></g></svg>
<div class="a" style="left:28px;top:6px;width:11px;height:11px;background:#fff"></div>
<svg class="a" style="left:28px;top:6px" width="11" height="11" viewBox="0 0 11 11"><path d="M1.2 5.2 L4.3 8.4 L10 2" stroke="#111" stroke-width="1.15" fill="none"/></svg>
<div class="t" style="left:47px;top:5px;color:#f4f4f4;font-size:12px;transform:scaleX(1.007);transform-origin:0 0">PushUp</div>
<div class="a" style="left:109px;top:10px;width:154px;height:4px;background:#e8e8e8"></div>
<div class="a" style="left:101px;top:3px;width:11px;height:17px;background:#0b7ede;border-radius:0 0 5px 5px"></div>
<div class="a" style="left:278px;top:2px;width:40px;height:20px;background:#333;border:1px solid #575757"></div>
<div class="t" style="left:297px;top:6px;color:#ececec;font-size:12px;transform:scaleX(.95);transform-origin:0 0">0%</div>
</div>
<div class="a" style="left:1px;top:271px;width:322px;height:25px;background:#3e3e3e;border:1px solid #585858">
<div class="a" style="left:1px;top:1px;width:20px;height:20px;background:#e3e3e3"></div>
<svg class="a" style="left:0;top:0" width="24" height="24" viewBox="0 0 24 24"><g transform="translate(5.6 17) rotate(-52) scale(0.9)"><path d="M0 0 L2.6 -1.6 L2.6 1.6Z" fill="#2a2828"/><rect x="3.6" y="-2.7" width="9.6" height="5.4" fill="#3a3434"/><rect x="14" y="-2.7" width="1.4" height="5.4" fill="#3a3434"/><rect x="16.2" y="-2.7" width="1.6" height="5.4" fill="#3a3434"/></g></svg>
<div class="a" style="left:28px;top:6px;width:11px;height:11px;background:#fff"></div>
<svg class="a" style="left:28px;top:6px" width="11" height="11" viewBox="0 0 11 11"><path d="M1.2 5.2 L4.3 8.4 L10 2" stroke="#111" stroke-width="1.15" fill="none"/></svg>
<div class="t" style="left:47px;top:5px;color:#f4f4f4;font-size:12px;transform:scaleX(0.999);transform-origin:0 0">BreastHeight</div>
<div class="a" style="left:136px;top:10px;width:127px;height:4px;background:#e8e8e8"></div>
<div class="a" style="left:128px;top:3px;width:11px;height:17px;background:#0b7ede;border-radius:0 0 5px 5px"></div>
<div class="a" style="left:278px;top:2px;width:40px;height:20px;background:#333;border:1px solid #575757"></div>
<div class="t" style="left:297px;top:6px;color:#ececec;font-size:12px;transform:scaleX(.95);transform-origin:0 0">0%</div>
</div>
<div class="a" style="left:1px;top:298px;width:322px;height:25px;background:#3e3e3e;border:1px solid #585858">
<div class="a" style="left:1px;top:1px;width:20px;height:20px;background:#e3e3e3"></div>
<svg class="a" style="left:0;top:0" width="24" height="24" viewBox="0 0 24 24"><g transform="translate(5.6 17) rotate(-52) scale(0.9)"><path d="M0 0 L2.6 -1.6 L2.6 1.6Z" fill="#2a2828"/><rect x="3.6" y="-2.7" width="9.6" height="5.4" fill="#3a3434"/><rect x="14" y="-2.7" width="1.4" height="5.4" fill="#3a3434"/><rect x="16.2" y="-2.7" width="1.6" height="5.4" fill="#3a3434"/></g></svg>
<div class="a" style="left:28px;top:6px;width:11px;height:11px;background:#fff"></div>
<svg class="a" style="left:28px;top:6px" width="11" height="11" viewBox="0 0 11 11"><path d="M1.2 5.2 L4.3 8.4 L10 2" stroke="#111" stroke-width="1.15" fill="none"/></svg>
<div class="t" style="left:47px;top:5px;color:#f4f4f4;font-size:12px;transform:scaleX(0.940);transform-origin:0 0">BreastPerkiness</div>
<div class="a" style="left:149px;top:10px;width:114px;height:4px;background:#e8e8e8"></div>
<div class="a" style="left:141px;top:3px;width:11px;height:17px;background:#0b7ede;border-radius:0 0 5px 5px"></div>
<div class="a" style="left:278px;top:2px;width:40px;height:20px;background:#333;border:1px solid #575757"></div>
<div class="t" style="left:297px;top:6px;color:#ececec;font-size:12px;transform:scaleX(.95);transform-origin:0 0">0%</div>
</div>
<div class="a" style="left:1px;top:325px;width:322px;height:25px;background:#3e3e3e;border:1px solid #585858">
<div class="a" style="left:1px;top:1px;width:20px;height:20px;background:#e3e3e3"></div>
<svg class="a" style="left:0;top:0" width="24" height="24" viewBox="0 0 24 24"><g transform="translate(5.6 17) rotate(-52) scale(0.9)"><path d="M0 0 L2.6 -1.6 L2.6 1.6Z" fill="#2a2828"/><rect x="3.6" y="-2.7" width="9.6" height="5.4" fill="#3a3434"/><rect x="14" y="-2.7" width="1.4" height="5.4" fill="#3a3434"/><rect x="16.2" y="-2.7" width="1.6" height="5.4" fill="#3a3434"/></g></svg>
<div class="a" style="left:28px;top:6px;width:11px;height:11px;background:#fff"></div>
<svg class="a" style="left:28px;top:6px" width="11" height="11" viewBox="0 0 11 11"><path d="M1.2 5.2 L4.3 8.4 L10 2" stroke="#111" stroke-width="1.15" fill="none"/></svg>
<div class="t" style="left:47px;top:5px;color:#f4f4f4;font-size:12px;transform:scaleX(1.002);transform-origin:0 0">BreastWidth</div>
<div class="a" style="left:132px;top:10px;width:131px;height:4px;background:#e8e8e8"></div>
<div class="a" style="left:124px;top:3px;width:11px;height:17px;background:#0b7ede;border-radius:0 0 5px 5px"></div>
<div class="a" style="left:278px;top:2px;width:40px;height:20px;background:#333;border:1px solid #575757"></div>
<div class="t" style="left:297px;top:6px;color:#ececec;font-size:12px;transform:scaleX(.95);transform-origin:0 0">0%</div>
</div>
<div class="a" style="left:1px;top:352px;width:322px;height:25px;background:#3e3e3e;border:1px solid #585858">
<div class="a" style="left:1px;top:1px;width:20px;height:20px;background:#e3e3e3"></div>
<svg class="a" style="left:0;top:0" width="24" height="24" viewBox="0 0 24 24"><g transform="translate(5.6 17) rotate(-52) scale(0.9)"><path d="M0 0 L2.6 -1.6 L2.6 1.6Z" fill="#2a2828"/><rect x="3.6" y="-2.7" width="9.6" height="5.4" fill="#3a3434"/><rect x="14" y="-2.7" width="1.4" height="5.4" fill="#3a3434"/><rect x="16.2" y="-2.7" width="1.6" height="5.4" fill="#3a3434"/></g></svg>
<div class="a" style="left:28px;top:6px;width:11px;height:11px;background:#fff"></div>
<svg class="a" style="left:28px;top:6px" width="11" height="11" viewBox="0 0 11 11"><path d="M1.2 5.2 L4.3 8.4 L10 2" stroke="#111" stroke-width="1.15" fill="none"/></svg>
<div class="t" style="left:47px;top:5px;color:#f4f4f4;font-size:12px;transform:scaleX(1.008);transform-origin:0 0">NippleDistance</div>
<div class="a" style="left:148px;top:10px;width:115px;height:4px;background:#e8e8e8"></div>
<div class="a" style="left:140px;top:3px;width:11px;height:17px;background:#0b7ede;border-radius:0 0 5px 5px"></div>
<div class="a" style="left:278px;top:2px;width:40px;height:20px;background:#333;border:1px solid #575757"></div>
<div class="t" style="left:297px;top:6px;color:#ececec;font-size:12px;transform:scaleX(.95);transform-origin:0 0">0%</div>
</div>
<div class="a" style="left:1px;top:379px;width:322px;height:25px;background:#3e3e3e;border:1px solid #585858">
<div class="a" style="left:1px;top:1px;width:20px;height:20px;background:#e3e3e3"></div>
<svg class="a" style="left:0;top:0" width="24" height="24" viewBox="0 0 24 24"><g transform="translate(5.6 17) rotate(-52) scale(0.9)"><path d="M0 0 L2.6 -1.6 L2.6 1.6Z" fill="#2a2828"/><rect x="3.6" y="-2.7" width="9.6" height="5.4" fill="#3a3434"/><rect x="14" y="-2.7" width="1.4" height="5.4" fill="#3a3434"/><rect x="16.2" y="-2.7" width="1.6" height="5.4" fill="#3a3434"/></g></svg>
<div class="a" style="left:28px;top:6px;width:11px;height:11px;background:#fff"></div>
<svg class="a" style="left:28px;top:6px" width="11" height="11" viewBox="0 0 11 11"><path d="M1.2 5.2 L4.3 8.4 L10 2" stroke="#111" stroke-width="1.15" fill="none"/></svg>
<div class="t" style="left:47px;top:5px;color:#f4f4f4;font-size:12px;transform:scaleX(0.984);transform-origin:0 0">NipplePerkiness</div>
<div class="a" style="left:153px;top:10px;width:110px;height:4px;background:#e8e8e8"></div>
<div class="a" style="left:145px;top:3px;width:11px;height:17px;background:#0b7ede;border-radius:0 0 5px 5px"></div>
<div class="a" style="left:278px;top:2px;width:40px;height:20px;background:#333;border:1px solid #575757"></div>
<div class="t" style="left:297px;top:6px;color:#ececec;font-size:12px;transform:scaleX(.95);transform-origin:0 0">0%</div>
</div>
</div>
<div class="a" style="left:1116px;top:317px;width:17px;height:391px;background:#f0f0f0"></div>
<svg class="a" style="left:1116px;top:320px" width="17" height="12" viewBox="0 0 17 12"><path d="M5.2 7.6 L8.5 4.3 L11.8 7.6" stroke="#484848" stroke-width="2.3" fill="none"/></svg>
<div class="a" style="left:1117px;top:334px;width:15px;height:40px;background:#cdcdcd"></div>
<svg class="a" style="left:1116px;top:694px" width="17" height="12" viewBox="0 0 17 12"><path d="M5.2 4.4 L8.5 7.7 L11.8 4.4" stroke="#484848" stroke-width="2.3" fill="none"/></svg>
<div class="a" style="left:793px;top:708px;width:340px;height:17px;background:#f0f0f0"></div>
<svg class="a" style="left:795px;top:708px" width="12" height="17" viewBox="0 0 12 17"><path d="M7.6 5.2 L4.3 8.5 L7.6 11.8" stroke="#484848" stroke-width="2.3" fill="none"/></svg>
<div class="a" style="left:810px;top:709px;width:273px;height:15px;background:#cdcdcd"></div>
<svg class="a" style="left:1101px;top:708px" width="12" height="17" viewBox="0 0 12 17"><path d="M4.4 5.2 L7.7 8.5 L4.4 11.8" stroke="#484848" stroke-width="2.3" fill="none"/></svg>
</body></html>
